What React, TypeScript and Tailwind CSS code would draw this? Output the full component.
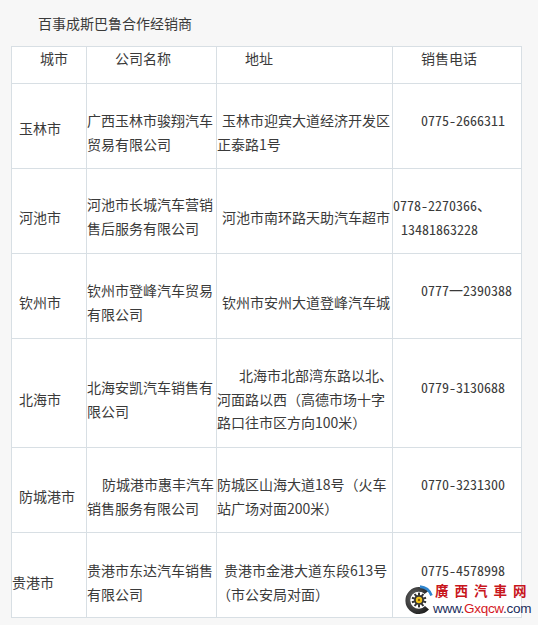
import React from "react";

type Line = [string, string]; // [indent class, text]

interface Row {
  h: string;
  city: string;
  cityCls: string;
  comp: Line[];
  compPt: string;
  addr: Line[];
  addrPt: string;
  phone: Line[];
  phonePt: string;
}

const rows: Row[] = [
  {
    h: "h-[85px]",
    city: "玉林市",
    cityCls: "pt-[33px] pl-[7px]",
    comp: [["pl-0", "广西玉林市骏翔汽车"], ["pl-0", "贸易有限公司"]],
    compPt: "pt-[25px]",
    addr: [["pl-[5px]", "玉林市迎宾大道经济开发区"], ["pl-0", "正泰路1号"]],
    addrPt: "pt-[25px]",
    phone: [["pl-[28px]", "0775-2666311"]],
    phonePt: "pt-[25px]",
  },
  {
    h: "h-[85px]",
    city: "河池市",
    cityCls: "pt-[37px] pl-[7px]",
    comp: [["pl-0", "河池市长城汽车营销"], ["pl-0", "售后服务有限公司"]],
    compPt: "pt-[24px]",
    addr: [["pl-[5px]", "河池市南环路天助汽车超市"]],
    addrPt: "pt-[37px]",
    phone: [["pl-0", "0778-2270366、"], ["pl-[8px]", "13481863228"]],
    phonePt: "pt-[25px]",
  },
  {
    h: "h-[85px]",
    city: "钦州市",
    cityCls: "pt-[37px] pl-[7px]",
    comp: [["pl-0", "钦州市登峰汽车贸易"], ["pl-0", "有限公司"]],
    compPt: "pt-[25px]",
    addr: [["pl-[5px]", "钦州市安州大道登峰汽车城"]],
    addrPt: "pt-[37px]",
    phone: [["pl-[28px]", "0777一2390388"]],
    phonePt: "pt-[25px]",
  },
  {
    h: "h-[109px]",
    city: "北海市",
    cityCls: "pt-[49px] pl-[7px]",
    comp: [["pl-0", "北海安凯汽车销售有"], ["pl-0", "限公司"]],
    compPt: "pt-[37px]",
    addr: [
      ["pl-[22px]", "北海市北部湾东路以北、"],
      ["pl-0", "河面路以西（高德市场十字"],
      ["pl-0", "路口往市区方向100米）"],
    ],
    addrPt: "pt-[25px]",
    phone: [["pl-[28px]", "0779-3130688"]],
    phonePt: "pt-[37px]",
  },
  {
    h: "h-[85px]",
    city: "防城港市",
    cityCls: "pt-[37px] pl-[7px]",
    comp: [["pl-[15px]", "防城港市惠丰汽车"], ["pl-0", "销售服务有限公司"]],
    compPt: "pt-[25px]",
    addr: [["pl-0", "防城区山海大道18号（火车"], ["pl-0", "站广场对面200米）"]],
    addrPt: "pt-[25px]",
    phone: [["pl-[28px]", "0770-3231300"]],
    phonePt: "pt-[25px]",
  },
  {
    h: "h-[85px]",
    city: "贵港市",
    cityCls: "pt-[38px] pl-0",
    comp: [["pl-0", "贵港市东达汽车销售"], ["pl-0", "有限公司"]],
    compPt: "pt-[26px]",
    addr: [["pl-[7px]", "贵港市金港大道东段613号"], ["pl-0", "（市公安局对面）"]],
    addrPt: "pt-[26px]",
    phone: [["pl-[28px]", "0775-4578998"]],
    phonePt: "pt-[26px]",
  },
];

const cell = "border-r border-b border-[#d8dfe4] bg-white";
const mono = "font-['Noto_Sans_Mono_CJK_SC','Liberation_Mono',monospace]";

function Lines({ lines, extra = "" }: { lines: Line[]; extra?: string }) {
  return (
    <>
      {lines.map(([ind, t], i) => (
        <div key={i} className={`${ind} ${extra} whitespace-nowrap`}>
          {t}
        </div>
      ))}
    </>
  );
}

function Tire() {
  const teeth = Array.from({ length: 10 }, (_, i) => i * 36);
  return (
    <svg width="30" height="30" viewBox="0 0 30 30">
      <defs>
        <radialGradient id="tg" cx="0.4" cy="0.4" r="0.7">
          <stop offset="0" stopColor="#6a6a6a" />
          <stop offset="1" stopColor="#1c1c1c" />
        </radialGradient>
      </defs>
      <path d="M 24.5 6 A 13.5 13.5 0 1 0 25 24.5 L 21 21 A 8.5 8.5 0 1 1 20.5 9 Z" fill="url(#tg)" />
      <path d="M 16 1.6 A 13.5 13.5 0 0 1 27.5 10.5" stroke="#2f86cf" strokeWidth="2.6" fill="none" />
      <circle cx="15" cy="15" r="8" fill="#ffffff" />
      {teeth.map((a) => (
        <rect key={a} x="14" y="7.6" width="2" height="3" fill="#333" transform={`rotate(${a} 15 15)`} />
      ))}
      <circle cx="15" cy="15" r="5" fill="#333" />
      <circle cx="15" cy="15" r="3.2" fill="#f2c31a" />
      <circle cx="15" cy="15" r="1.2" fill="#8a5a00" />
    </svg>
  );
}

export default function App() {
  return (
    <div className="relative w-[538px] h-[625px] bg-[#f7f7f7] text-[#3a3a3a] text-[14px] leading-[23.5px] font-['Noto_Sans_CJK_SC',sans-serif] overflow-hidden">
      <div className="h-[46px] pt-[12px] pl-[38px]">百事成斯巴鲁合作经销商</div>
      <div className="ml-[11px] w-[511px] border-l border-t border-[#d8dfe4] grid grid-cols-[75px_130px_176px_129px]">
        <div className={`${cell} h-[37px] pl-[28px]`}>城市</div>
        <div className={`${cell} h-[37px] pl-[28px]`}>公司名称</div>
        <div className={`${cell} h-[37px] pl-[28px]`}>地址</div>
        <div className={`${cell} h-[37px] pl-[28px]`}>销售电话</div>
        {rows.map((r, i) => (
          <React.Fragment key={i}>
            <div className={`${cell} ${r.h} ${r.cityCls} whitespace-nowrap`}>{r.city}</div>
            <div className={`${cell} ${r.h} ${r.compPt}`}>
              <Lines lines={r.comp} />
            </div>
            <div className={`${cell} ${r.h} ${r.addrPt}`}>
              <Lines lines={r.addr} />
            </div>
            <div className={`${cell} ${r.h} ${r.phonePt}`}>
              <Lines lines={r.phone} extra={mono} />
            </div>
          </React.Fragment>
        ))}
      </div>
      <div className="absolute left-[404px] top-[583px] flex items-center">
        <Tire />
        <div className="flex flex-col ml-[-1px]">
          <div className="h-[15px] leading-[15px] text-[13.5px] font-bold text-[#c8161d] tracking-[6px] pl-[2px] font-['Noto_Sans_CJK_TC','Noto_Sans_CJK_SC',sans-serif]">
            廣西汽車网
          </div>
          <div className="mt-[4px] h-[14px] leading-[14px] text-[13.5px] font-['Liberation_Sans',Arial,sans-serif] tracking-[-0.3px]">
            <span className="text-[#1b2d5c]">www.</span>
            <span className="text-[#d4181f]">Gxqcw</span>
            <span className="text-[#1b2d5c]">.com</span>
          </div>
        </div>
      </div>
    </div>
  );
}
